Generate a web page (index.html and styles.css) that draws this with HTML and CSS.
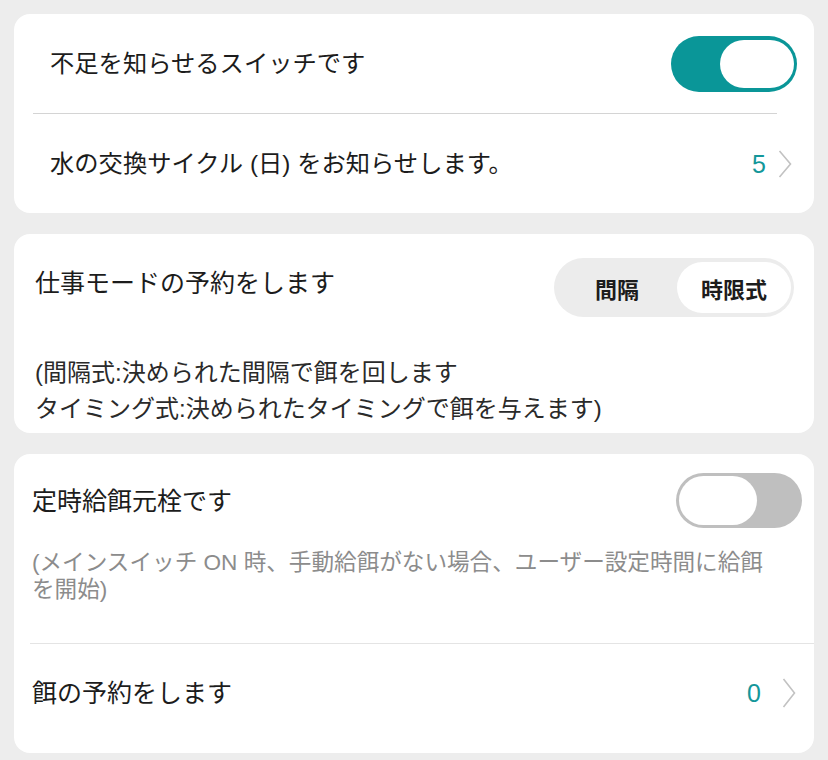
FILE: index.html
```html
<!DOCTYPE html>
<html lang="ja">
<head>
<meta charset="utf-8">
<link rel="stylesheet" href="styles.css">
</head>
<body>
<div class="page">
  <section class="card card-one">
    <div class="row row-top">
      <span class="label label-sm">不足を知らせるスイッチです</span>
      <div class="toggle toggle-on"><div class="knob knob-on"></div></div>
    </div>
    <div class="divider divider-one"></div>
    <div class="row row-bottom">
      <span class="label label-sm">水の交換サイクル (日) をお知らせします。</span>
      <span class="value value-tight">
        <span class="num">5</span>
        <svg class="chev" width="14" height="28" viewBox="0 0 14 28"><polyline points="1.5,1 12.5,14 1.5,27" fill="none" stroke="#c2c2c2" stroke-width="1.6"/></svg>
      </span>
    </div>
  </section>

  <section class="card card-two">
    <div class="head">
      <span class="label title-two">仕事モードの予約をします</span>
      <div class="segment">
        <span class="seg-item">間隔</span>
        <span class="seg-item seg-active">時限式</span>
      </div>
    </div>
    <p class="desc desc-dark">(間隔式:決められた間隔で餌を回します<br>タイミング式:決められたタイミングで餌を与えます)</p>
  </section>

  <section class="card card-three">
    <div class="head head-three">
      <span class="label">定時給餌元栓です</span>
      <div class="toggle toggle-off"><div class="knob knob-off"></div></div>
    </div>
    <p class="desc desc-gray">(メインスイッチ ON 時、手動給餌がない場合、ユーザー設定時間に給餌<br>を開始)</p>
    <div class="divider divider-three"></div>
    <div class="row row-feed">
      <span class="label">餌の予約をします</span>
      <span class="value value-wide">
        <span class="num">0</span>
        <svg class="chev" width="14" height="30" viewBox="0 0 14 30"><polyline points="1.5,1 12.5,15 1.5,29" fill="none" stroke="#c2c2c2" stroke-width="1.6"/></svg>
      </span>
    </div>
  </section>
</div>
</body>
</html>
```

FILE: styles.css
```css
* { box-sizing: border-box; }
html, body { margin: 0; padding: 0; }
body {
  background: #ededed;
  font-family: "Liberation Sans", "Noto Sans CJK JP", sans-serif;
  color: #1e1e1e;
  width: 828px;
  height: 760px;
  overflow: hidden;
}
.page {
  padding: 14px 14px 0 14px;
  display: flex;
  flex-direction: column;
  gap: 21px;
}
.card {
  background: #ffffff;
  border-radius: 16px;
}
.label {
  font-size: 25px;
  line-height: 30px;
  color: #1c1c1c;
  white-space: nowrap;
}
.label-sm { font-size: 24.3px; }

.card-one { height: 199px; display: flex; flex-direction: column; }
.row {
  display: flex;
  align-items: center;
  justify-content: space-between;
}
.row-top { height: 99px; padding: 0 17px 0 36px; }
.row-bottom { height: 99px; padding: 0 22px 0 36px; }
.divider-one {
  height: 1px;
  background: #d4d4d4;
  margin: 0 37px 0 19px;
}

.toggle {
  width: 126px;
  height: 56px;
  border-radius: 28px;
  display: flex;
  align-items: center;
  padding: 0 3px;
}
.toggle-on { background: #0a9698; justify-content: flex-end; }
.toggle-off { background: #bfbfbf; justify-content: flex-start; height: 55px; }
.knob { background: #ffffff; border-radius: 25px; }
.knob-on { width: 74px; height: 48px; }
.knob-off { width: 78px; height: 49px; }

.value { display: flex; align-items: center; }
.value-tight { gap: 12px; }
.value-wide { gap: 21px; }
.num {
  font-family: "Liberation Sans", sans-serif;
  font-size: 25px;
  color: #14979a;
  line-height: 30px;
}
.chev { display: block; }

.card-two { height: 199px; padding: 24px 20px 0 21px; }
.head {
  display: flex;
  align-items: center;
  justify-content: space-between;
}
.title-two { margin-bottom: 10px; }
.segment {
  width: 240px;
  height: 59px;
  background: #ececec;
  border-radius: 30px;
  padding: 4px 3px;
  display: flex;
}
.seg-item {
  flex: 1;
  display: flex;
  align-items: center;
  justify-content: center;
  font-size: 22px;
  font-weight: bold;
  color: #1c1c1c;
  font-family: "Noto Sans CJK JP", sans-serif;
}
.seg-item:first-child { flex: 0 0 120px; }
.seg-active { background: #ffffff; border-radius: 26px; }

.desc { margin: 0; }
.desc-dark {
  margin-top: 38px;
  font-size: 24px;
  line-height: 36px;
  color: #2a2a2a;
  white-space: nowrap;
}

.card-three { height: 299px; padding-top: 19px; }
.head-three { padding: 0 12px 0 18px; }
.desc-gray {
  margin: 21px 20px 0 18px;
  font-size: 22.6px;
  line-height: 27px;
  color: #8c8c8c;
  white-space: nowrap;
}
.divider-three {
  height: 1px;
  background: #e4e4e4;
  margin: 40px 0 0 16px;
}
.row-feed { height: 109px; padding: 0 18px 12px 18px; }
```
